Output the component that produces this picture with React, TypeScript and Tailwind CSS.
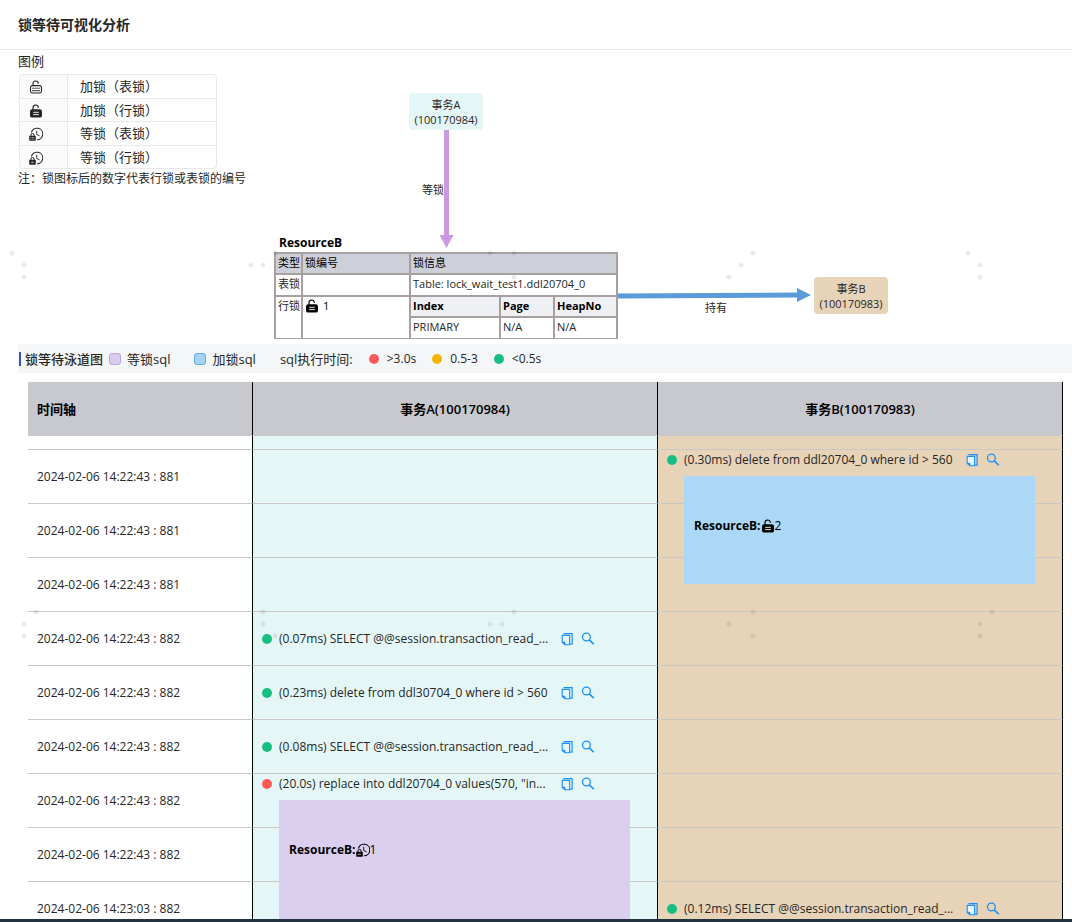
import React from "react";

type IconProps = { className?: string };

function TableLockIcon({ className = "h-3.5 w-3.5" }: IconProps) {
  return (
    <svg viewBox="0 0 14 14" className={className} fill="none" stroke="currentColor" aria-hidden="true">
      <path d="M4 5.6V3.6a2.7 2.7 0 0 1 5.3-.6v.8" strokeWidth="1.1" />
      <rect x="1.5" y="5.6" width="11" height="7.4" rx="1.9" strokeWidth="1.1" />
      <path d="M3.2 8.2h7.6M3.2 10.6h7.6" strokeWidth="1.1" strokeDasharray="1.5 0.55" />
    </svg>
  );
}

function RowLockIcon({ className = "h-3.5 w-3.5" }: IconProps) {
  return (
    <svg viewBox="0 0 14 14" className={className} fill="none" stroke="currentColor" aria-hidden="true">
      <path d="M4 6V3.6a2.7 2.7 0 0 1 5.3-.6v.8" strokeWidth="1.2" />
      <rect x="1" y="5.2" width="12" height="8.4" rx="2.2" fill="currentColor" stroke="none" />
      <path d="M4.2 8.3h5.6M4.2 10.6h5.6" stroke="#fff" strokeWidth="0.9" />
    </svg>
  );
}

function WaitLockIcon({ className = "h-3.5 w-3.5", grid = false }: IconProps & { grid?: boolean }) {
  return (
    <svg viewBox="0 0 14 14" className={className} fill="none" stroke="currentColor" aria-hidden="true">
      <path d="M2.4 5.4A5.8 5.8 0 1 1 8 12.8" strokeWidth="1.1" />
      <path d="M7.7 3.8v3.7l2.9 1.3" strokeWidth="0.9" />
      <path d="M1.9 9.4V8a1.6 1.6 0 0 1 3.2 0v1.4" strokeWidth="1" />
      <rect x="0.2" y="8.8" width="6.6" height="5" rx="0.7" fill="currentColor" stroke="none" />
      {grid ? (
        <path d="M1.4 10.5h4.3M1.4 12.1h4.3" stroke="#fff" strokeWidth="0.6" strokeDasharray="0.9 0.6" />
      ) : (
        <path d="M2.1 11.3h2.8" stroke="#fff" strokeWidth="0.7" />
      )}
    </svg>
  );
}

function CopyIcon() {
  return (
    <svg viewBox="0 0 12 14" className="h-3.5 w-3" fill="none" stroke="#1890ff" aria-hidden="true">
      <path d="M2.4 1.6h8.7v10.6H9.2" strokeWidth="1.2" />
      <path d="M1.2 3.4h7.4v9.4H4L1.2 10.4z" fill="#e6f7ff" strokeWidth="1.1" />
      <path d="M1.2 10.2H4v2.7z" fill="#1890ff" strokeWidth="0.8" />
    </svg>
  );
}

function SearchIcon() {
  return (
    <svg viewBox="0 0 14 14" className="h-3.5 w-3.5" fill="none" stroke="#1890ff" aria-hidden="true">
      <circle cx="5.4" cy="5" r="3.9" strokeWidth="1.3" />
      <path d="M8.3 7.9l4.5 4.4" strokeWidth="1.6" />
    </svg>
  );
}

const legend = [
  { icon: <TableLockIcon />, label: "加锁（表锁）" },
  { icon: <RowLockIcon />, label: "加锁（行锁）" },
  { icon: <WaitLockIcon grid />, label: "等锁（表锁）" },
  { icon: <WaitLockIcon />, label: "等锁（行锁）" },
];

type Block = { kind: "wait" | "hold"; id: number };
type Sql = { text: string; tone: "fast" | "slow"; block?: Block };
type Row = { time: string; a?: Sql; b?: Sql };

const rows: Row[] = [
  {
    time: "2024-02-06 14:22:43 : 881",
    b: { text: "(0.30ms) delete from ddl20704_0 where id > 560", tone: "fast", block: { kind: "hold", id: 2 } },
  },
  { time: "2024-02-06 14:22:43 : 881" },
  { time: "2024-02-06 14:22:43 : 881" },
  { time: "2024-02-06 14:22:43 : 882", a: { text: "(0.07ms) SELECT @@session.transaction_read_...", tone: "fast" } },
  { time: "2024-02-06 14:22:43 : 882", a: { text: "(0.23ms) delete from ddl30704_0 where id > 560", tone: "fast" } },
  { time: "2024-02-06 14:22:43 : 882", a: { text: "(0.08ms) SELECT @@session.transaction_read_...", tone: "fast" } },
  {
    time: "2024-02-06 14:22:43 : 882",
    a: { text: '(20.0s) replace into ddl20704_0 values(570, "in...', tone: "slow", block: { kind: "wait", id: 1 } },
  },
  { time: "2024-02-06 14:22:43 : 882" },
  { time: "2024-02-06 14:23:03 : 882", b: { text: "(0.12ms) SELECT @@session.transaction_read_...", tone: "fast" } },
];

function SqlEntry({ sql }: { sql: Sql }) {
  return (
    <div className="flex items-center">
      <span className={`mr-[7px] h-2.5 w-2.5 shrink-0 rounded-full ${sql.tone === "fast" ? "bg-[#19be83]" : "bg-[#ff5a5a]"}`} />
      <span className="mr-3 min-w-[270px] whitespace-nowrap">{sql.text}</span>
      <button type="button" aria-label="复制" className="mr-2 shrink-0 cursor-pointer">
        <CopyIcon />
      </button>
      <button type="button" aria-label="查看" className="shrink-0 cursor-pointer">
        <SearchIcon />
      </button>
    </div>
  );
}

function LaneCell({ sql, lane }: { sql?: Sql; lane: string }) {
  const block = sql?.block;
  return (
    <td className={`relative border-r border-b border-r-black border-b-[#c8c8c8] p-0 pl-[9px] ${lane} ${block ? "align-top" : "align-middle"}`}>
      {sql && <SqlEntry sql={sql} />}
      {block && (
        <div
          className={`absolute top-[26px] right-[27px] left-[26px] z-10 flex items-start pt-10 pl-2.5 text-black ${
            block.kind === "hold" ? "h-[108px] bg-[#acd8f7]" : "h-[540px] bg-[#dacfee]"
          }`}
        >
          <span className="flex items-center leading-5">
            <b className="font-bold">ResourceB:</b>
            {block.kind === "hold" ? <RowLockIcon /> : <WaitLockIcon />}
            <span>{block.id}</span>
          </span>
        </div>
      )}
    </td>
  );
}

const dots: [number, number][] = [
  [12, 253], [24, 265], [24, 277],
  [251, 265], [263, 265], [275, 253],
  [490, 253], [514, 253], [514, 277],
  [753, 253], [741, 265], [729, 277],
  [968, 253], [980, 265], [980, 277],
  [36, 612], [24, 624], [24, 636],
  [263, 612], [263, 624], [275, 636],
  [514, 612], [490, 624], [502, 624],
  [753, 612], [729, 624], [753, 636],
  [992, 612], [980, 624], [980, 636],
];

function Watermark() {
  return (
    <svg className="pointer-events-none absolute inset-0 z-30 h-full w-full" aria-hidden="true">
      {dots.map(([x, y]) => (
        <circle key={`${x}-${y}`} cx={x} cy={y} r="2.5" fill="#000" fillOpacity="0.08" />
      ))}
    </svg>
  );
}

function ResourceTable() {
  const cell = "border-2 border-[#a8a0a0] px-0.5 py-0 text-left align-top font-normal whitespace-nowrap";
  return (
    <div className="absolute top-[184px] left-[274px]">
      <div className="pl-[5px] text-xs leading-[18px] font-bold text-black">ResourceB</div>
      <table className="w-[344px] table-fixed border-collapse text-[11px] leading-[18px]">
        <colgroup>
          <col className="w-[27px]" />
          <col className="w-[108px]" />
          <col className="w-[90px]" />
          <col className="w-[54px]" />
          <col />
        </colgroup>
        <thead>
          <tr className="h-[21px] bg-[#cdd0d9] text-black">
            <th className={cell}>类型</th>
            <th className={cell}>锁编号</th>
            <th className={cell} colSpan={3}>锁信息</th>
          </tr>
        </thead>
        <tbody>
          <tr className="h-[22px]">
            <td className={cell}>表锁</td>
            <td className={cell} />
            <td className={cell} colSpan={3}>Table: lock_wait_test1.ddl20704_0</td>
          </tr>
          <tr className="h-[21px]">
            <td className={cell} rowSpan={2}>行锁</td>
            <td className={cell} rowSpan={2}>
              <span className="flex items-center gap-1 text-black">
                <RowLockIcon className="h-3.5 w-3.5" />1
              </span>
            </td>
            <th className={`${cell} bg-[#eff0f3] text-black`}><b>Index</b></th>
            <th className={`${cell} bg-[#eff0f3] text-black`}><b>Page</b></th>
            <th className={`${cell} bg-[#eff0f3] text-black`}><b>HeapNo</b></th>
          </tr>
          <tr className="h-[22px]">
            <td className={cell}>PRIMARY</td>
            <td className={cell}>N/A</td>
            <td className={cell}>N/A</td>
          </tr>
        </tbody>
      </table>
    </div>
  );
}

function Diagram() {
  const node = "absolute flex h-[37px] w-[74px] flex-col items-center justify-center rounded text-[11px] leading-[15px]";
  return (
    <div className="absolute inset-x-0 top-0 h-[289px] overflow-hidden">
      <svg className="absolute inset-0 h-full w-full" aria-hidden="true">
        <path d="M446.500 80V188" stroke="#cb99e2" strokeWidth="5" />
        <path d="M439.500 185h14l-7 13z" fill="#cb99e2" />
        <path d="M617 246L798 245" stroke="#5b9bd9" strokeWidth="5" />
        <path d="M797 238v14l14-7z" fill="#5b9bd9" />
      </svg>
      <div className={`${node} top-[43px] left-[409px] bg-[#e4f7f6]`}>
        <span>事务A</span>
        <span>(100170984)</span>
      </div>
      <div className={`${node} top-[227px] left-[814px] bg-[#e6d3b8]`}>
        <span>事务B</span>
        <span>(100170983)</span>
      </div>
      <span className="absolute top-[132px] left-[422px] text-[11px] leading-4">等锁</span>
      <span className="absolute top-[250px] left-[705px] text-[11px] leading-4">持有</span>
      <ResourceTable />
    </div>
  );
}

export default function App() {
  return (
    <div className="relative flex h-screen flex-col overflow-hidden border-b-[3px] border-[#22343f] bg-white font-['Open_Sans','Noto_Sans_CJK_SC',sans-serif] text-[13px] text-[#262626]">
      <header className="shrink-0 border-b border-[#e8e8e8] px-[18px] py-3.5">
        <h1 className="text-sm leading-[21px] font-semibold">锁等待可视化分析</h1>
      </header>

      <section className="relative h-[294px] shrink-0 px-[18px]">
        <Diagram />
        <h2 className="pb-1 text-[13px] leading-5 pt-0">
          <span className="block pt-px">图例</span>
        </h2>
        <table className="-mt-px ml-px h-[95px] w-[198px] border-separate border-spacing-0 overflow-hidden rounded-sm border border-[#e8e8e8] leading-5">
          <tbody>
            {legend.map((item, i) => (
              <tr key={item.label}>
                <td className={`w-12 border-r border-[#e8e8e8] bg-[#fafafa] p-0 pt-0.5 pl-[9px] ${i < 3 ? "border-b" : ""}`}>{item.icon}</td>
                <td className={`border-[#e8e8e8] p-0 pl-3 ${i < 3 ? "border-b" : ""}`}>{item.label}</td>
              </tr>
            ))}
          </tbody>
        </table>
        <p className="text-xs leading-5">注：锁图标后的数字代表行锁或表锁的编号</p>
      </section>

      <div className="ml-[18px] flex h-[29px] shrink-0 items-center bg-[#f4f6f8] pl-px leading-5 whitespace-nowrap">
        <span className="mr-1 h-3.5 w-0.5 bg-[#2f54c4]" />
        <h2 className="mr-1.5 font-medium">锁等待泳道图</h2>
        <span className="mr-1.5 h-3 w-3 rounded-[3px] border border-[#b9a3e0] bg-[#d8ccec]" />
        <span className="mr-6">等锁sql</span>
        <span className="mr-1.5 h-3 w-3 rounded-[3px] border border-[#5cabec] bg-[#a6d4f5]" />
        <span className="mr-6">加锁sql</span>
        <span className="mr-4">sql执行时间:</span>
        <span className="mr-2 h-2.5 w-2.5 rounded-full bg-[#ff5a5a]" />
        <span className="mr-4 text-xs">&gt;3.0s</span>
        <span className="mr-2 h-2.5 w-2.5 rounded-full bg-[#f7b500]" />
        <span className="mr-4 text-xs">0.5-3</span>
        <span className="mr-2 h-2.5 w-2.5 rounded-full bg-[#19be83]" />
        <span className="text-xs">&lt;0.5s</span>
      </div>

      <main className="mt-[9px] mr-[9px] ml-7 min-h-0 flex-1 overflow-hidden">
        <table className="w-full table-fixed border-separate border-spacing-0 text-xs leading-5">
          <colgroup>
            <col className="w-[225px]" />
            <col />
            <col />
          </colgroup>
          <thead>
            <tr className="h-[54px] bg-[#c8c9ce] text-[13px] text-black">
              <th className="border-r border-b border-r-black border-b-[#c8c8c8] p-0 pl-[9px] text-left font-semibold">时间轴</th>
              <th className="border-r border-b border-r-black border-b-[#c8c8c8] p-0 font-semibold">事务A(100170984)</th>
              <th className="border-r border-b border-r-black border-b-[#c8c8c8] p-0 font-semibold">事务B(100170983)</th>
            </tr>
          </thead>
          <tbody>
            <tr className="h-3.5">
              <td className="border-r border-b border-r-black border-b-[#c8c8c8] p-0" />
              <LaneCell lane="bg-[#e4f7f6]" />
              <LaneCell lane="bg-[#e6d3b8]" />
            </tr>
            {rows.map((row, i) => (
              <tr key={i} className="h-[54px]">
                <td className="border-r border-b border-r-black border-b-[#c8c8c8] p-0 pl-[9px]">{row.time}</td>
                <LaneCell sql={row.a} lane="bg-[#e4f7f6]" />
                <LaneCell sql={row.b} lane="bg-[#e6d3b8]" />
              </tr>
            ))}
          </tbody>
        </table>
      </main>
      <Watermark />
    </div>
  );
}
